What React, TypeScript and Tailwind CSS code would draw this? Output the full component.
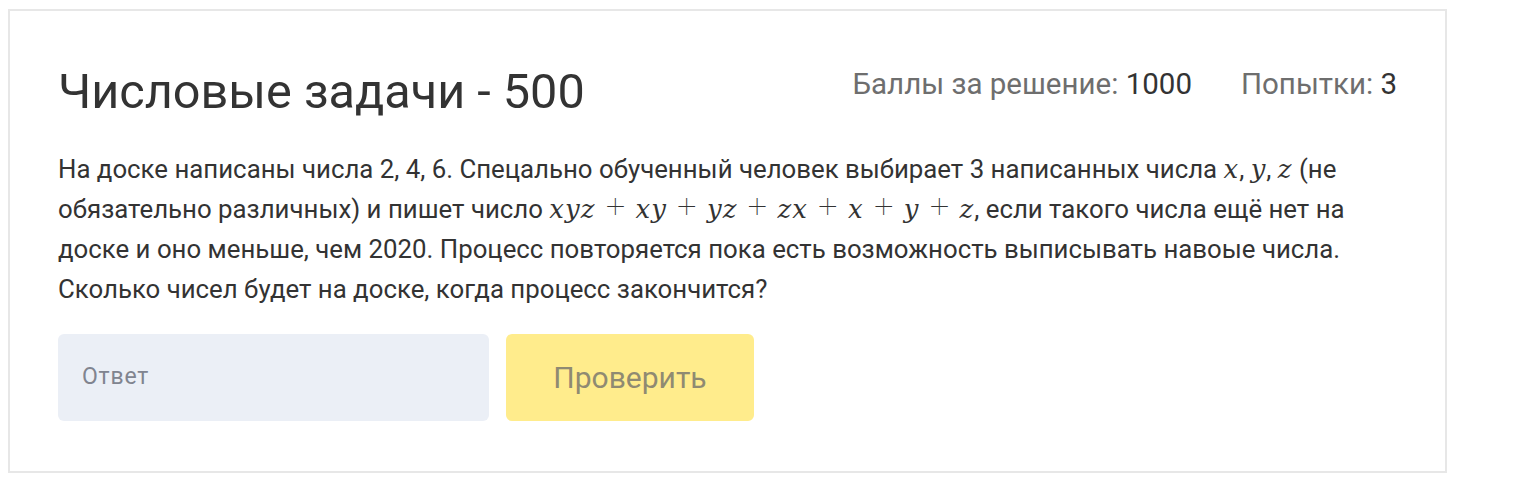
import React from "react";

const serif = { fontFamily: '"DejaVu Serif", "Liberation Serif", serif' };

const M = ({ children }: { children: React.ReactNode }) => (
  <i className="italic font-normal text-[26px] leading-none tracking-[1px]" style={serif}>
    {children}
  </i>
);

const Plus = () => (
  <span className="mx-[10.5px] text-[34px] leading-none font-thin" style={{ fontFamily: 'Roboto, sans-serif' }}>
    +
  </span>
);

export default function App() {
  return (
    <div className="min-h-[503px] w-[1539px] bg-white pl-[8px] pt-[9px]" style={{ fontFamily: 'Roboto, "Liberation Sans", sans-serif' }}>
      <div className="w-[1439px] border-2 border-[#e7e7e7] pl-[48px] pr-[48px] pt-[53px] pb-[50px]">
        <div className="flex items-start justify-between">
          <h1 className="text-[48.6px] leading-[56px] font-normal text-[#333333]">Числовые задачи - 500</h1>
          <div className="mt-[2px] flex gap-[49px] text-[29.5px] leading-[36px]">
            <span className="text-[#6e6e6e]">
              Баллы за решение: <span className="text-[#333333]">1000</span>
            </span>
            <span className="text-[#6e6e6e]">
              Попытки: <span className="text-[#333333]">3</span>
            </span>
          </div>
        </div>
        <p className="mt-[29px] text-[25.8px] leading-[40px] text-[#333333]">
          На доске написаны числа 2, 4, 6. Спецально обученный человек выбирает 3 написанных числа <M>x</M>, <M>y</M>, <M>z</M> (не
          обязательно различных) и пишет число <M>xyz</M>
          <Plus />
          <M>xy</M>
          <Plus />
          <M>yz</M>
          <Plus />
          <M>zx</M>
          <Plus />
          <M>x</M>
          <Plus />
          <M>y</M>
          <Plus />
          <M>z</M>, если такого числа ещё нет на доске и оно меньше, чем 2020. Процесс повторяется пока есть возможность выписывать навоые числа.
          Сколько чисел будет на доске, когда процесс закончится?
        </p>
        <div className="mt-[25px] flex gap-[17px]">
          <div className="flex h-[87px] w-[431px] items-center rounded-[6px] bg-[#ebeff6] pl-[24px] text-[23px] tracking-[0.8px] text-[#80848f]">
            Ответ
          </div>
          <button className="h-[87px] w-[248px] rounded-[6px] bg-[#ffec8c] text-[30px] text-[#8f8a72]">Проверить</button>
        </div>
      </div>
    </div>
  );
}
